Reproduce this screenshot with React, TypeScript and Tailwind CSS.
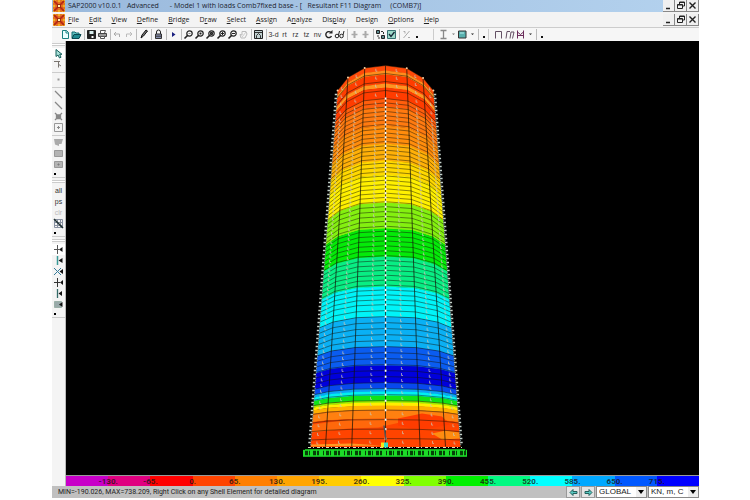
import type { ReactNode } from "react";
import clsx from "clsx";

const menus: [string, string, string][] = [
  ["", "F", "ile"],
  ["", "E", "dit"],
  ["", "V", "iew"],
  ["", "D", "efine"],
  ["", "B", "ridge"],
  ["D", "r", "aw"],
  ["", "S", "elect"],
  ["", "A", "ssign"],
  ["A", "n", "alyze"],
  ["Dis", "p", "lay"],
  ["Desi", "g", "n"],
  ["", "O", "ptions"],
  ["", "H", "elp"],
];

const Glyph = ({ children }: { children: ReactNode }) => (
  <svg viewBox="0 0 11 11" className="size-[11px] shrink-0" fill="none" stroke="#222" aria-hidden="true">
    {children}
  </svg>
);

const AppLogo = () => (
  <svg viewBox="0 0 12 12" className="size-3 shrink-0" aria-hidden="true">
    <rect width="12" height="12" fill="#f2ae24" />
    <path d="M1 1l3.5 3.5M11 1L7.5 4.500M1 11l3.500-3.500M11 11L7.500 7.500" stroke="#b32615" strokeWidth="2" />
    <path d="M4 0v3h4V0M4 12V9h4v3M0 4h3v4H0M12 4H9v4h3" fill="none" stroke="#d8401c" />
    <rect x="4.500" y="4.500" width="3" height="3" fill="#fff3b0" stroke="#9c2c12" />
  </svg>
);

const Lens = ({ children }: { children?: ReactNode }) => (
  <Glyph>
    <circle cx="6.500" cy="4.500" r="2.700" strokeWidth="1.200" />
    <path d="M4.500 6.500L1.500 9.500" strokeWidth="1.600" />
    {children}
  </Glyph>
);

const Letters = ({ children }: { children: string }) => (
  <span className="text-[7px] leading-none text-[#333]">{children}</span>
);

type Tool = { name: string; icon: ReactNode; narrow?: boolean } | "sep";

const mainTools: Tool[] = [
  { name: "New", icon: <Glyph><path d="M2.500 1.500h4l2 2v6h-6z" fill="#e9ffff" stroke="#188080" /><path d="M6 1.500v2.500h2.500" stroke="#188080" /></Glyph> },
  { name: "Open", icon: <Glyph><path d="M1 9V3h3l1 1h3v2" fill="#60c0c0" stroke="#176a70" /><path d="M1 9.500l2-4h7l-2 4z" fill="#208a90" stroke="#0a4850" /></Glyph> },
  "sep",
  { name: "Save", icon: <Glyph><path d="M1.500 1.500h8v8h-8z" fill="#222" /><path d="M3.500 2h4v3h-4z" fill="#d8eeee" stroke="none" /><path d="M5.500 7h2v2h-2z" fill="#fff" stroke="none" /></Glyph> },
  { name: "Print", icon: <Glyph><path d="M3.500 4V1.500h5L7.500 4" fill="#fff" stroke="#555" /><path d="M1.500 4.500h8v3h-8z" fill="#999" stroke="#444" /><path d="M3.500 7.500h4v2h-4z" fill="#fff" stroke="#555" /></Glyph> },
  "sep",
  { name: "Undo", icon: <Glyph><path d="M4 3L2 5l2 2M2 5h5.500v3" stroke="#aaa" /></Glyph> },
  { name: "Redo", icon: <Glyph><path d="M7 3l2 2-2 2M9 5H3.500v3" stroke="#bbb" /></Glyph> },
  "sep",
  { name: "Refresh window", icon: <Glyph><path d="M3 9l1-3 4-5 1.500 1L5.500 7z" fill="#777" stroke="#111" /></Glyph> },
  "sep",
  { name: "Lock model", icon: <Glyph><path d="M3.500 5V3a2 2 0 014 0v2" /><path d="M2.500 5h6v4.500h-6z" fill="#8890b0" stroke="#333" /><path d="M3 7.200h5" stroke="#333" /></Glyph> },
  "sep",
  { name: "Run analysis", icon: <Glyph><path d="M4 3l3.500 2.500L4 8z" fill="#1a2080" stroke="none" /></Glyph> },
  "sep",
  { name: "Rubber band zoom", icon: <Lens><path d="M5.500 4.500h2" stroke="#888" /></Lens> },
  { name: "Restore full view", icon: <Lens><path d="M5.500 4.500h2M6.500 3.500v2" strokeWidth="1.500" /></Lens> },
  { name: "Previous zoom", icon: <Lens><path d="M5.500 3.500h2v2h-2z" fill="#444" /></Lens> },
  { name: "Zoom in", icon: <Lens><path d="M5 4.500h3M6.500 3v3" /></Lens> },
  { name: "Zoom out", icon: <Lens><path d="M5 4.500h3" /></Lens> },
  { name: "Pan", icon: <Glyph><path d="M3 9L2 5.500l2 .5V2.500h4L9 5 7 9z" stroke="#bbb" /><path d="M4 8l4-5" stroke="#ccc" /></Glyph> },
  "sep",
  { name: "3D window", icon: <Glyph><path d="M1.500 1.500h8v8h-8z" fill="#c0d0d0" /><path d="M2 3.500h7M3.500 9V6.500l2-2 2 2V9" stroke="#333" /></Glyph> },
  "sep",
  { name: "3-d view", icon: <Letters>3-d</Letters> },
  { name: "xy view", icon: <Letters>rt</Letters> },
  { name: "xz view", icon: <Letters>rz</Letters> },
  { name: "yz view", icon: <Letters>tz</Letters> },
  { name: "Named view", icon: <Letters>nv</Letters> },
  { name: "Rotate view", icon: <Glyph><path d="M8 3.500A3 3 0 108.500 7" strokeWidth="1.400" /><path d="M6 4.500h3.500V1z" fill="#222" stroke="none" /></Glyph> },
  { name: "Perspective", icon: <Glyph><circle cx="3" cy="7" r="1.800" /><circle cx="7.500" cy="7" r="1.800" /><path d="M4.500 6l1-4M9 6l1-4" /></Glyph> },
  "sep",
  { name: "Up one gridline", icon: <Glyph><path d="M5.500 2v7" stroke="#aaa" strokeWidth="2" /><path d="M2.500 5.500h6" stroke="#aaa" strokeWidth="1.500" /></Glyph> },
  { name: "Down one gridline", icon: <Glyph><path d="M5.500 2v7" stroke="#aaa" strokeWidth="2" /><path d="M2.500 5.500h6" stroke="#aaa" strokeWidth="1.500" /></Glyph> },
  "sep",
  { name: "Object options", icon: <Glyph><path d="M1.500 1.500h3v3h-3zM6.500 6.500h3v3h-3z" fill="#5c8c90" /><path d="M6 2.500h2.500V5M3 6v3h2" stroke="#333" strokeDasharray="2 1" /></Glyph> },
  { name: "Set display", icon: <Glyph><path d="M1.500 1.500h8v8h-8z" fill="#9cd8c8" stroke="#357070" /><path d="M3 5l2 2.500L8.500 3" stroke="#123" strokeWidth="1.300" /></Glyph> },
  "sep",
  { name: "Assign ratio", icon: <Glyph><path d="M2.500 9l6-7M2.500 2.500h1.500v2M7 8.500h2" stroke="#aaa" /></Glyph> },
  { name: "More tools", icon: <Glyph><path d="M4 7h2v2H4z" fill="#111" stroke="none" /></Glyph> },
];

const frameTools: Tool[] = [
  { name: "Frame section", icon: <Glyph><path d="M2.500 1.500h6M2.500 9.500h6M5.500 1.500v8" stroke="#888" strokeWidth="1.300" /></Glyph> },
  { name: "Frame section list", narrow: true, icon: <Glyph><path d="M4 4.500h3L5.500 6z" fill="#777" stroke="none" /></Glyph> },
  { name: "Area section", icon: <Glyph><path d="M1.500 2h7.500v7H1.500z" fill="#58b0ae" stroke="#333" /><path d="M3 4h4" stroke="#b4eeee" /></Glyph> },
  { name: "Area section list", narrow: true, icon: <Glyph><path d="M4 4.500h3L5.500 6z" fill="#222" stroke="none" /></Glyph> },
  "sep",
  { name: "More sections", narrow: true, icon: <Glyph><path d="M4 7h2v2H4z" fill="#111" stroke="none" /></Glyph> },
];

const shapeTools: Tool[] = [
  { name: "Undeformed shape", icon: <Glyph><path d="M2.500 9.500v-7h6v7" stroke="#635064" /></Glyph> },
  { name: "Deformed shape", icon: <Glyph><path d="M2 9.500L3 2.500h3M6 9.500L7 3h3L8.500 9.500" stroke="#635064" /></Glyph> },
  { name: "Forces", icon: <Glyph><path d="M2.500 9.500v-8M8.500 9.500v-8M2.500 3l3 2.500 3-2.500M2.500 6.500h6" stroke="#6a2b5a" /></Glyph> },
  { name: "Forces list", narrow: true, icon: <Glyph><path d="M4 4.500h3L5.500 6z" fill="#222" stroke="none" /></Glyph> },
  "sep",
  { name: "More results", narrow: true, icon: <Glyph><path d="M4 7h2v2H4z" fill="#111" stroke="none" /></Glyph> },
];

const ToolGroup = ({ tools }: { tools: Tool[] }) => (
  <div className="flex items-center">
    {tools.map((tool, i) =>
      tool === "sep" ? (
        <span key={i} className="flex h-[11px] w-1 justify-center">
          <span className="w-px bg-[#bbb]" />
        </span>
      ) : (
        <button
          key={i}
          aria-label={tool.name}
          className={clsx("flex h-[11px] items-center justify-center", tool.narrow ? "w-2" : "w-[11px]")}
        >
          {tool.icon}
        </button>
      ),
    )}
  </div>
);

type SideItem = { name: string; icon: ReactNode; active?: boolean } | "sep" | "grip" | "more";

const sideItems: SideItem[] = [
  "grip",
  { name: "Select pointer", active: true, icon: <Glyph><path d="M3 1.500v7l2-1.500 1.500 3 1.500-.7L6.700 6.300H9z" fill="#a8e0d8" stroke="#17605c" /></Glyph> },
  { name: "Reshape", icon: <Glyph><path d="M1 2.500h6M5.500 2.500v6M5 5l3 2" stroke="#7a7570" /></Glyph> },
  "sep",
  { name: "Draw joint", icon: <Glyph><path d="M4.500 4.500h2v2h-2z" fill="#999" stroke="none" /></Glyph> },
  "sep",
  { name: "Draw frame", icon: <Glyph><path d="M2 2l7 7" stroke="#888" strokeWidth="1.300" /></Glyph> },
  { name: "Quick draw frame", icon: <Glyph><path d="M2 2l7 7" stroke="#888" strokeWidth="1.300" /></Glyph> },
  { name: "Quick draw braces", icon: <Glyph><path d="M2 2l7 7M9 2L2 9M3.500 4h4v3.500h-4z" stroke="#888" strokeWidth="1.300" /></Glyph> },
  { name: "Quick draw beams", icon: <Glyph><path d="M1.500 1.500h8v8h-8z" stroke="#999" /><path d="M4 5.500h3M5.500 4v3" stroke="#888" /></Glyph> },
  "sep",
  { name: "Draw area", icon: <Glyph><path d="M1 2h9L8.500 7H6v2L2 7.500z" fill="#aaa" stroke="none" /></Glyph> },
  { name: "Draw rectangle", icon: <Glyph><path d="M1.500 2.500h8v6h-8z" fill="#b4b4b4" stroke="#999" /></Glyph> },
  { name: "Quick draw area", icon: <Glyph><path d="M1.500 2.500h8v6h-8z" fill="#b4b4b4" stroke="#999" /><path d="M5 5h1v1H5z" stroke="#777" /></Glyph> },
  "more",
  "grip",
  { name: "Select all", icon: <Letters>all</Letters> },
  { name: "Previous selection", icon: <Letters>ps</Letters> },
  { name: "Clear selection", icon: <span className="text-[7px] leading-none text-[#bbb]">clr</span> },
  { name: "Intersecting line", icon: <Glyph><path d="M1.500 1.500h8v8h-8zM4.500 1.500v8M7.500 1.500v8M1.500 4.500h8M1.500 7.500h8" stroke="#8890a0" /><path d="M1 1l9 9" stroke="#233" strokeWidth="1.500" /></Glyph> },
  "more",
  "grip",
  { name: "Snap to points", active: true, icon: <Glyph><path d="M1 5.500h5M4.500 1v9" stroke="#555" /><path d="M9.500 3v5L6 5.500z" fill="#111" stroke="none" /></Glyph> },
  { name: "Snap to ends", icon: <Glyph><path d="M4.500 1v9" stroke="#3a9a98" strokeWidth="1.500" /><path d="M9.500 3v5L5.500 5.500z" fill="#111" stroke="none" /></Glyph> },
  { name: "Snap to intersections", icon: <Glyph><path d="M1 2l7 7M8 2L1 9" stroke="#347a98" /><path d="M10 3v5L6.500 5.500z" fill="#111" stroke="none" /></Glyph> },
  { name: "Snap to perpendicular", icon: <Glyph><path d="M1 5.500h6M4.500 1v9" stroke="#333" /><path d="M10 3v5L7 5.500z" fill="#111" stroke="none" /></Glyph> },
  { name: "Snap to lines", icon: <Glyph><path d="M4.500 1v9" stroke="#336a68" strokeWidth="1.300" /><path d="M9 3v5L5.500 5.500z" fill="#111" stroke="none" /></Glyph> },
  { name: "Snap to grid", icon: <Glyph><path d="M1.500 2.500h7v6h-7z" fill="#9aa" stroke="#9bb0a8" /><path d="M9.500 3v5L6 5.500z" fill="#111" stroke="none" /></Glyph> },
  "more",
];

const SideBar = () => (
  <div className="flex w-3.5 shrink-0 flex-col items-center border-r border-[#bbb] bg-[#f4f4f4]">
    {sideItems.map((item, i) => {
      if (item === "grip")
        return (
          <span key={i} className="flex h-[7px] w-full items-center">
            <span className="h-[3px] w-full border-y border-[#ccc] bg-white" />
          </span>
        );
      if (item === "sep")
        return (
          <span key={i} className="flex h-1 w-full items-center">
            <span className="h-px w-full bg-[#ccc]" />
          </span>
        );
      if (item === "more")
        return (
          <span key={i} className="flex h-2 w-full items-center border-b border-[#ccc] pl-0.5">
            <span className="size-0.5 bg-black" />
          </span>
        );
      return (
        <button
          key={i}
          aria-label={item.name}
          className={clsx("flex h-[11px] w-full items-center justify-center", item.active && "bg-white")}
        >
          {item.icon}
        </button>
      );
    })}
  </div>
);

// Shell geometry: a faceted cylinder seen slightly from below.
const CX = 385.5;
const TOP = 65;
const BASE = 446;
const facets = [-1, -0.8, -0.45, 0, 0.46, 0.8, 1];
const sag = [1, 0.48, 0.1, 0, 0.11, 0.5, 1];
const midLines = [-0.92, -0.63, -0.21, 0.23, 0.63, 0.92];

const halfWidth = (y: number) => 46 + ((y - TOP) / (BASE - TOP)) * 29;
const drop = (y: number) => 25 * Math.max(0, (BASE - y) / (BASE - TOP)) ** 0.75;

const sagAt = (u: number) => {
  for (let i = 1; i < facets.length; i++) {
    if (u <= facets[i]) {
      const t = (u - facets[i - 1]) / (facets[i] - facets[i - 1]);
      return sag[i - 1] + t * (sag[i] - sag[i - 1]);
    }
  }
  return 1;
};

const point = (u: number, y: number) => {
  const py = y + sagAt(u) * drop(y);
  return { x: CX + u * halfWidth(py), y: py };
};

const ring = (y: number, us = facets) => us.map((u) => point(u, y)).map((p) => `${p.x.toFixed(1)},${p.y.toFixed(1)}`);

const bands: [number, string][] = [
  [65, "#ff4a08"],
  [70, "#ff8c1c"],
  [74, "#ff3d00"],
  [83, "#ff9420"],
  [87, "#ff3c00"],
  [98, "#ff5e0c"],
  [106, "#ff7a10"],
  [125, "#ff8c0c"],
  [143, "#ffb008"],
  [160, "#ffd800"],
  [174, "#fff000"],
  [202, "#84f010"],
  [228, "#04ea08"],
  [256, "#08ee84"],
  [286, "#00f4f8"],
  [316, "#0ab0f4"],
  [346, "#0a5cf0"],
  [365, "#0000dc"],
  [382, "#0848ee"],
  [388, "#0aa4f4"],
  [391, "#00f0f0"],
  [395, "#10e418"],
  [400, "#98f000"],
  [402, "#ffee00"],
  [405, "#ffb000"],
  [409, "#ff8010"],
  [418, "#ff4400"],
];

const rings: number[] = [65, 73, 81, 90, 98];
for (let y = 98; y < 436; ) {
  y += y < 200 ? 4.3 : y < 300 ? 4.9 : y < 400 ? 6 : 9.5;
  rings.push(y);
}

const Tower = () => (
  <svg
    viewBox="0 0 633 433"
    className="block h-full w-full"
    role="img"
    aria-label="Resultant F11 contour on chimney shell"
  >
    <g transform="translate(-66 -41)">
      {bands.map(([y, fill], i) => {
        const next = i + 1 < bands.length ? bands[i + 1][0] : BASE;
        return <polygon key={y} fill={fill} points={[...ring(y), ...ring(next + 0.4).reverse()].join(" ")} />;
      })}
      <path d="M312 424l40-5 48-1 0 4-22 5-30 1-36 4z" fill="#ff7810" opacity=".7" />
      <path d="M398 418l24-5 20 3 8 8-30 6-22-5z" fill="#ff3c00" />
      <path d="M432 433l14-3 13 2 1 6-18 1z" fill="#ff8c10" />
      <path d="M311 444l40-1 30 2-70 1z" fill="#ff9a20" />
      {rings.map((y) => (
        <polyline key={y} points={ring(y).join(" ")} fill="none" stroke="#141408" strokeWidth=".8" opacity=".6" />
      ))}
      {facets.slice(1, -1).map((u) => {
        const a = point(u, TOP);
        const b = point(u, BASE);
        return <line key={u} x1={a.x} y1={a.y} x2={b.x} y2={b.y} stroke="#141408" strokeWidth=".9" opacity=".8" />;
      })}
      {midLines.map((u) =>
        rings.map((y) => {
          const p = point(u, y + 2);
          return (
            <path
              key={y}
              d={`M${p.x.toFixed(1)} ${p.y.toFixed(1)}v2.500h1.500`}
              fill="none"
              stroke="#c9c5b4"
              strokeWidth=".9"
              opacity=".8"
            />
          );
        }),
      )}
      {rings.slice(4).map((y) => (
        <rect key={y} x={CX - 0.8} y={y - 1} width="1.8" height="2.200" fill="#fff" />
      ))}
      {Array.from({ length: 88 }, (_, i) => 94 + i * 4).map((y) => (
        <g key={y} stroke="#c6d4cc" strokeWidth="1.300">
          <path d={`M${CX - halfWidth(y) - 2.5} ${y}h2.500M${CX + halfWidth(y)} ${y}h2.500`} />
          <path d={`M${CX - halfWidth(y) - 0.5} ${y + 2}h1M${CX + halfWidth(y)} ${y + 2}h1`} stroke="#7a8f90" />
        </g>
      ))}
      {[-1, -0.8, -0.45, 0.46, 0.8, 1].map((u) => {
        const p = point(u, TOP);
        return <circle key={u} cx={p.x} cy={p.y} r="1" fill="#ffd0a0" />;
      })}
      <path d="M308 447h154" stroke="#d8e0c0" strokeDasharray="3 2 1 3" />
      <path d="M303 449h164v7h-164z" fill="#064008" />
      <path d="M305 449.500h160M303 455.500h164" stroke="#1ce028" strokeWidth="1.300" />
      <path d="M303 452.500h164" stroke="#1cdc28" strokeWidth="6" strokeDasharray="2 3 1 1 3 3 1 2 4 1" />
      <path d="M384 425l2 15" stroke="#555" strokeWidth="1.500" />
      <rect x="381" y="442" width="3" height="5" fill="#f4e818" />
      <rect x="384" y="442" width="4" height="5" fill="#30e0c8" />
    </g>
  </svg>
);

const legend: [string, string][] = [
  ["-130.", "bg-[#c800c8]"],
  ["-65.", "bg-[#e00080]"],
  ["0.", "bg-[#ff0000]"],
  ["65.", "bg-[#ff4400]"],
  ["130.", "bg-[#ff7f00]"],
  ["195.", "bg-[#ffa500]"],
  ["260.", "bg-[#ffcc00]"],
  ["325.", "bg-[#ffff00]"],
  ["390.", "bg-[#80ff00]"],
  ["455.", "bg-[#00f000]"],
  ["520.", "bg-[#00fa82]"],
  ["585.", "bg-[#00ffff]"],
  ["650.", "bg-[#00a8ff]"],
  ["715.", "bg-[#0058ff]"],
  ["", "bg-[#0000ff]"],
];

const Legend = () => (
  <div className="flex h-[11px] border-t border-[#999]">
    {legend.map(([label, color]) => (
      <div key={color} className={clsx("relative flex-1", color)}>
        <span className="absolute right-0 z-10 translate-x-1/2 font-['Roboto',sans-serif] text-[8px] leading-[11px] font-bold text-[#1a1410]/80">
          {label}
        </span>
      </div>
    ))}
  </div>
);

const WindowButtons = ({ scope }: { scope: string }) => (
  <div className="ml-auto flex items-center">
    {[
      ["Minimize", <path key="p" d="M3 8.500h4" strokeWidth="1.500" />],
      ["Restore", <path key="p" d="M4.500 4V2h5v4H8M2.500 4.500h5v4h-5zM2.500 5h5M4.500 2.500h5" />],
      ["Close", <path key="p" d="M2.500 2.500l6 6M8.500 2.500l-6 6" strokeWidth="1.400" />],
    ].map(([name, icon]) => (
      <button
        key={name as string}
        aria-label={`${name} ${scope}`}
        className="flex h-3 w-3 items-center justify-center border-r border-b border-[#888] bg-[#f0f0f0]"
      >
        <Glyph>{icon}</Glyph>
      </button>
    ))}
  </div>
);

const Picker = ({ label, value }: { label: string; value: string }) => (
  <div className="relative h-3 w-[51px] border border-[#888] bg-white">
    <select aria-label={label} className="block h-full w-full appearance-none pl-0.5 text-[8px] leading-[10px] text-[#222]">
      <option>{value}</option>
    </select>
    <span className="pointer-events-none absolute inset-y-0 right-0 flex w-2.5 items-center justify-center bg-[#eee]">
      <svg viewBox="0 0 6 4" className="h-1 w-1.5" aria-hidden="true">
        <path d="M0 0h6L3 4z" />
      </svg>
    </span>
  </div>
);

const App = () => {
  return (
    <div className="h-screen bg-white pr-[51px] pb-0.5 pl-[52px] font-['Liberation_Sans',sans-serif]">
      <div className="flex h-full flex-col overflow-hidden">
        <header className="flex h-3 shrink-0 items-center gap-[3px] bg-linear-to-r from-[#9ab9dc] to-[#b4d2ee] pl-px">
          <AppLogo />
          <h1 className="font-['Open_Sans',sans-serif] text-[7px] leading-3 whitespace-pre text-[#1c2430]">
            {"SAP2000 v10.0.1   Advanced      - Model 1 with loads Comb7fixed base - [   Resultant F11 Diagram     (COMB7)]"}
          </h1>
          <WindowButtons scope="application" />
        </header>
        <nav className="flex h-[15px] shrink-0 items-center bg-[#f3f3f3] pl-px">
          <AppLogo />
          <div className="ml-[3px] flex gap-2.5 font-['Open_Sans',sans-serif] text-[7px] leading-3 text-[#222]">
            {menus.map(([before, key, after]) => (
              <button key={before + key + after}>
                {before}
                <span className="underline">{key}</span>
                {after}
              </button>
            ))}
          </div>
          <WindowButtons scope="document" />
        </nav>
        <div className="flex h-3.5 shrink-0 items-center border-t border-[#ccc] bg-[#f6f6f6] pl-2">
          <ToolGroup tools={mainTools} />
          <div className="ml-2.5 border-l border-[#ccc] pl-1">
            <ToolGroup tools={frameTools} />
          </div>
          <div className="border-l border-[#ccc] pl-1">
            <ToolGroup tools={shapeTools} />
          </div>
        </div>
        <div className="flex min-h-0 flex-1">
          <SideBar />
          <main className="flex min-w-0 flex-1 flex-col">
            <div className="min-h-0 flex-1 bg-black">
              <Tower />
            </div>
            <Legend />
          </main>
        </div>
        <footer className="flex h-3 shrink-0 items-center bg-[#c0c0c0] pl-1.5">
          <p className="font-['Roboto',sans-serif] text-[7px] leading-3 text-[#222]">
            MIN=-190.026, MAX=738.209, Right Click on any Shell Element for detailed diagram
          </p>
          <div className="ml-auto flex items-center gap-px">
            {["M2 5.500l3-3v2h4v2H5v2z", "M9 5.500l-3-3v2H2v2h4v2z"].map((d, i) => (
              <button
                key={d}
                aria-label={i ? "Next" : "Previous"}
                className="flex h-3 w-3.5 items-center justify-center border border-[#999] bg-[#e4e4e4]"
              >
                <Glyph>
                  <path d={d} fill="#58c8c0" stroke="#24605c" />
                </Glyph>
              </button>
            ))}
            <Picker label="Coordinate system" value="GLOBAL" />
            <Picker label="Units" value="KN, m, C" />
          </div>
        </footer>
      </div>
    </div>
  );
};

export default App;
